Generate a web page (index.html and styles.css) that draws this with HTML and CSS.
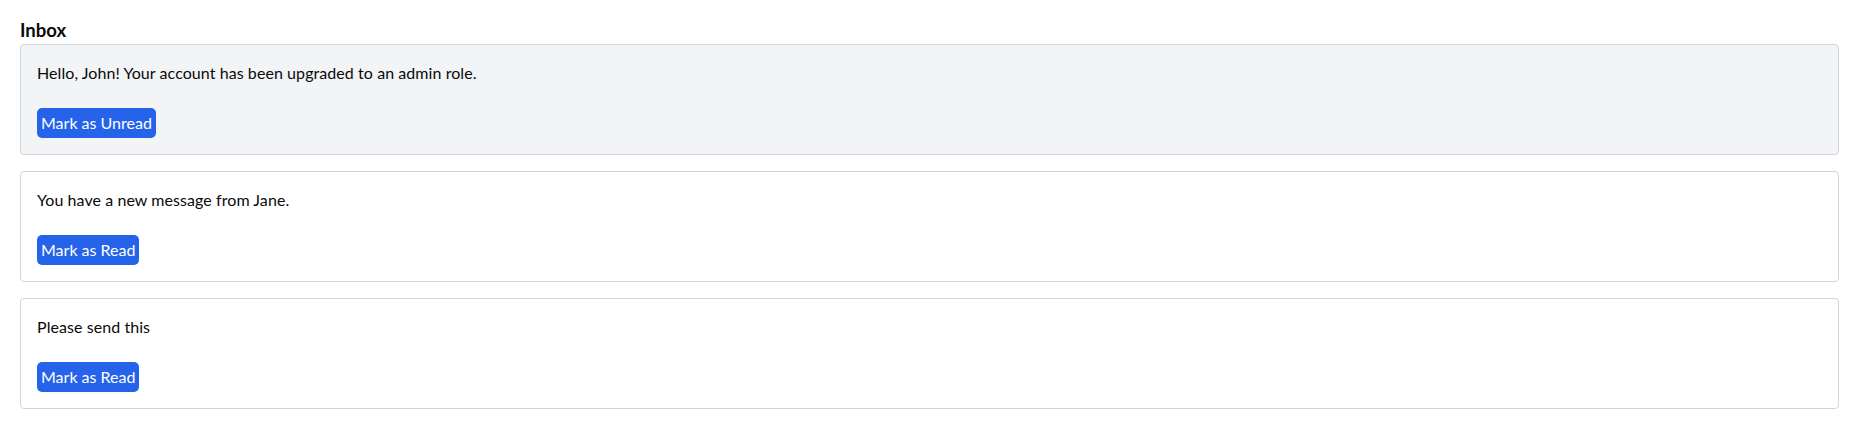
FILE: index.html
```html
<!DOCTYPE html>
<html lang="en">
<head>
<meta charset="utf-8">
<title>Inbox</title>
<link rel="stylesheet" href="styles.css">
</head>
<body>
<div class="page">
  <h2 class="title">Inbox</h2>
  <div class="list">
    <div class="card card-read">
      <p class="msg">Hello, John! Your account has been upgraded to an admin role.</p>
      <button class="btn">Mark as Unread</button>
    </div>
    <div class="card">
      <p class="msg">You have a new message from Jane.</p>
      <button class="btn">Mark as Read</button>
    </div>
    <div class="card">
      <p class="msg">Please send this</p>
      <button class="btn">Mark as Read</button>
    </div>
  </div>
</div>
</body>
</html>
```

FILE: styles.css
```css
html, body {
  margin: 0;
  padding: 0;
  background: #ffffff;
}
body {
  font-family: "Lato", "Liberation Sans", sans-serif;
  color: #0a0a0a;
}
.page {
  padding: 16px 19px 0 20px;
}
.title {
  margin: 0;
  font-size: 18.5px;
  line-height: 28px;
  font-weight: 700;
  color: #0a0a0a;
}
.list {
  display: flex;
  flex-direction: column;
  gap: 16px;
}
.card {
  border: 1px solid #d1d5db;
  border-radius: 4px;
  background: #ffffff;
  padding: 16px;
}
.card-read {
  background: #f3f4f6;
}
.msg {
  margin: 0 0 23px;
  font-size: 16px;
  line-height: 24px;
  letter-spacing: 0.07px;
}
.btn {
  display: block;
  font-family: inherit;
  font-size: 16px;
  line-height: 24px;
  padding: 3px 4px;
  border: 0;
  border-radius: 5px;
  background: #2563eb;
  color: #ffffff;
  cursor: pointer;
}
```
